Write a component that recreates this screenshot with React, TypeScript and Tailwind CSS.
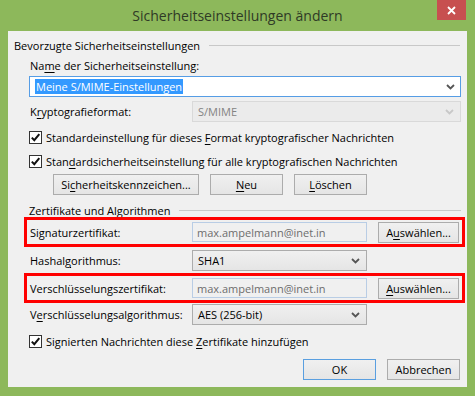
import React from 'react';

const Chevron = ({ disabled }: { disabled?: boolean }) => (
  <svg width="9" height="6" viewBox="0 0 9 6" className="shrink-0">
    <path d="M1 1 L4.5 4.5 L8 1" fill="none" stroke={disabled ? '#c8c8c8' : '#555555'} strokeWidth="1.8" />
  </svg>
);

const Check = () => (
  <div className="w-[13px] h-[13px] border border-[#333333] bg-white flex items-center justify-center shrink-0">
    <svg width="11" height="11" viewBox="0 0 11 11">
      <path d="M1.8 5.6 L4.3 8.2 L9.3 2.2" fill="none" stroke="#111111" strokeWidth="2" />
    </svg>
  </div>
);

const U = ({ children }: { children: React.ReactNode }) => (
  <span className="underline underline-offset-[2px]">{children}</span>
);

const Button = ({ children, w, primary }: { children: React.ReactNode; w: string; primary?: boolean }) => (
  <div
    className={`${w} h-[21px] flex items-center justify-center border bg-gradient-to-b from-[#f0f0f0] to-[#e5e5e5] ${
      primary ? 'border-[#5a9fe0]' : 'border-[#acacac]'
    }`}
  >
    {children}
  </div>
);

const Combo = ({ value, disabled }: { value: string; disabled?: boolean }) => (
  <div
    className={`w-[175px] h-[21px] flex items-center justify-between pl-[5px] pr-[6px] border ${
      disabled
        ? 'border-[#d9d9d9] bg-[#ebebeb] text-[#838383]'
        : 'border-[#acacac] bg-gradient-to-b from-[#f0f0f0] to-[#e5e5e5]'
    }`}
  >
    <span>{value}</span>
    <Chevron disabled={disabled} />
  </div>
);

const ReadOnlyField = () => (
  <div className="w-[175px] h-[20px] flex items-center pl-[4px] border border-[#b9cde5] bg-[#f0f0f0] text-[#6d6d6d]">
    max.ampelmann@inet.in
  </div>
);

const GroupHeader = ({ title, className }: { title: string; className: string }) => (
  <div className={`flex items-center h-[16px] ${className}`}>
    <span className="whitespace-nowrap">{title}</span>
    <div className="flex-1 ml-[9px] border-t border-[#c8c8c8]" />
  </div>
);

const CertRow = ({ label, button }: { label: React.ReactNode; button: React.ReactNode }) => (
  <div className="ml-[16px] mr-[2px] h-[30px] border-[3px] border-[#ff0000] flex items-center pl-[3px] pr-[3px]">
    <div className="w-[162px]">{label}</div>
    <ReadOnlyField />
    <div className="ml-[11px]">
      <Button w="w-[81px]">{button}</Button>
    </div>
  </div>
);

export default function App() {
  return (
    <div className="w-[475px] h-[396px] bg-[#8db85b] flex flex-col font-['Open_Sans','Noto_Sans',sans-serif] text-[11px] leading-[15px] text-black">
      <div className="relative h-[31px] flex items-center justify-center">
        <span className="text-[14px] text-[#2f3a26] pb-[1px]">Sicherheitseinstellungen ändern</span>
        <div className="absolute top-0 right-[9px] w-[29px] h-[20px] bg-[#c75050] flex items-center justify-center">
          <svg width="9" height="9" viewBox="0 0 9 9">
            <path d="M1 1 L8 8 M8 1 L1 8" stroke="#ffffff" strokeWidth="1.8" />
          </svg>
        </div>
      </div>

      <div className="mx-[8px] h-[356px] bg-[#f0f0f0] flex flex-col">
        <GroupHeader title="Bevorzugte Sicherheitseinstellungen" className="mt-[6px] ml-[6px] mr-[7px]" />

        <div className="mt-[4px] ml-[22px] h-[16px] flex items-center">
          Na<U>m</U>e der Sicherheitseinstellung:
        </div>

        <div className="mt-[3px] ml-[21px] mr-[6px] h-[21px] border border-[#569de5] bg-white flex items-center justify-between pl-[5px] pr-[5px]">
          <span className="bg-[#3399ff] text-white px-[1px]">Meine S/MIME-Einstellungen</span>
          <Chevron />
        </div>

        <div className="mt-[4px] ml-[22px] mr-[6px] flex items-center">
          <div className="w-[162px]">
            K<U>r</U>yptografieformat:
          </div>
          <div className="flex-1">
            <div className="w-full h-[21px] flex items-center justify-between pl-[5px] pr-[6px] border border-[#d9d9d9] bg-[#ebebeb] text-[#838383]">
              <span>S/MIME</span>
              <Chevron disabled />
            </div>
          </div>
        </div>

        <div className="mt-[8px] ml-[21px] h-[15px] flex items-center gap-[4px]">
          <Check />
          <span>
            Standardeinstellung für dieses <U>F</U>ormat kryptografischer Nachrichten
          </span>
        </div>

        <div className="mt-[9px] ml-[21px] h-[15px] flex items-center gap-[4px]">
          <Check />
          <span>
            Stan<U>d</U>ardsicherheitseinstellung für alle kryptografischen Nachrichten
          </span>
        </div>

        <div className="mt-[5px] ml-[45px] flex gap-[11px]">
          <Button w="w-[146px]">
            <span>
              Si<U>c</U>herheitskennzeichen...
            </span>
          </Button>
          <Button w="w-[73px]">
            <span>
              <U>N</U>eu
            </span>
          </Button>
          <Button w="w-[73px]">
            <span>
              <U>L</U>öschen
            </span>
          </Button>
        </div>

        <GroupHeader title="Zertifikate und Algorithmen" className="mt-[7px] ml-[21px] mr-[6px]" />

        <div className="mt-[-1px]">
          <CertRow
            label="Signaturzertifikat:"
            button={
              <span>
                A<U>u</U>swählen...
              </span>
            }
          />
        </div>

        <div className="mt-[3px] ml-[22px] flex items-center">
          <div className="w-[162px]">
            Hashal<U>g</U>orithmus:
          </div>
          <Combo value="SHA1" />
        </div>

        <div className="mt-[2px]">
          <CertRow
            label="Verschlüsselungszertifikat:"
            button={
              <span>
                <U>A</U>uswählen...
              </span>
            }
          />
        </div>

        <div className="mt-[1px] ml-[22px] flex items-center">
          <div className="w-[162px]">
            V<U>e</U>rschlüsselungsalgorithmus:
          </div>
          <Combo value="AES (256-bit)" />
        </div>

        <div className="mt-[9px] ml-[21px] h-[15px] flex items-center gap-[4px]">
          <Check />
          <span>
            Signierten Nachrichten diese <U>Z</U>ertifikate hinzufügen
          </span>
        </div>

        <div className="mt-[10px] mr-[7px] flex justify-end gap-[11px]">
          <Button w="w-[73px]" primary>
            OK
          </Button>
          <Button w="w-[73px]">Abbrechen</Button>
        </div>
      </div>
    </div>
  );
}
